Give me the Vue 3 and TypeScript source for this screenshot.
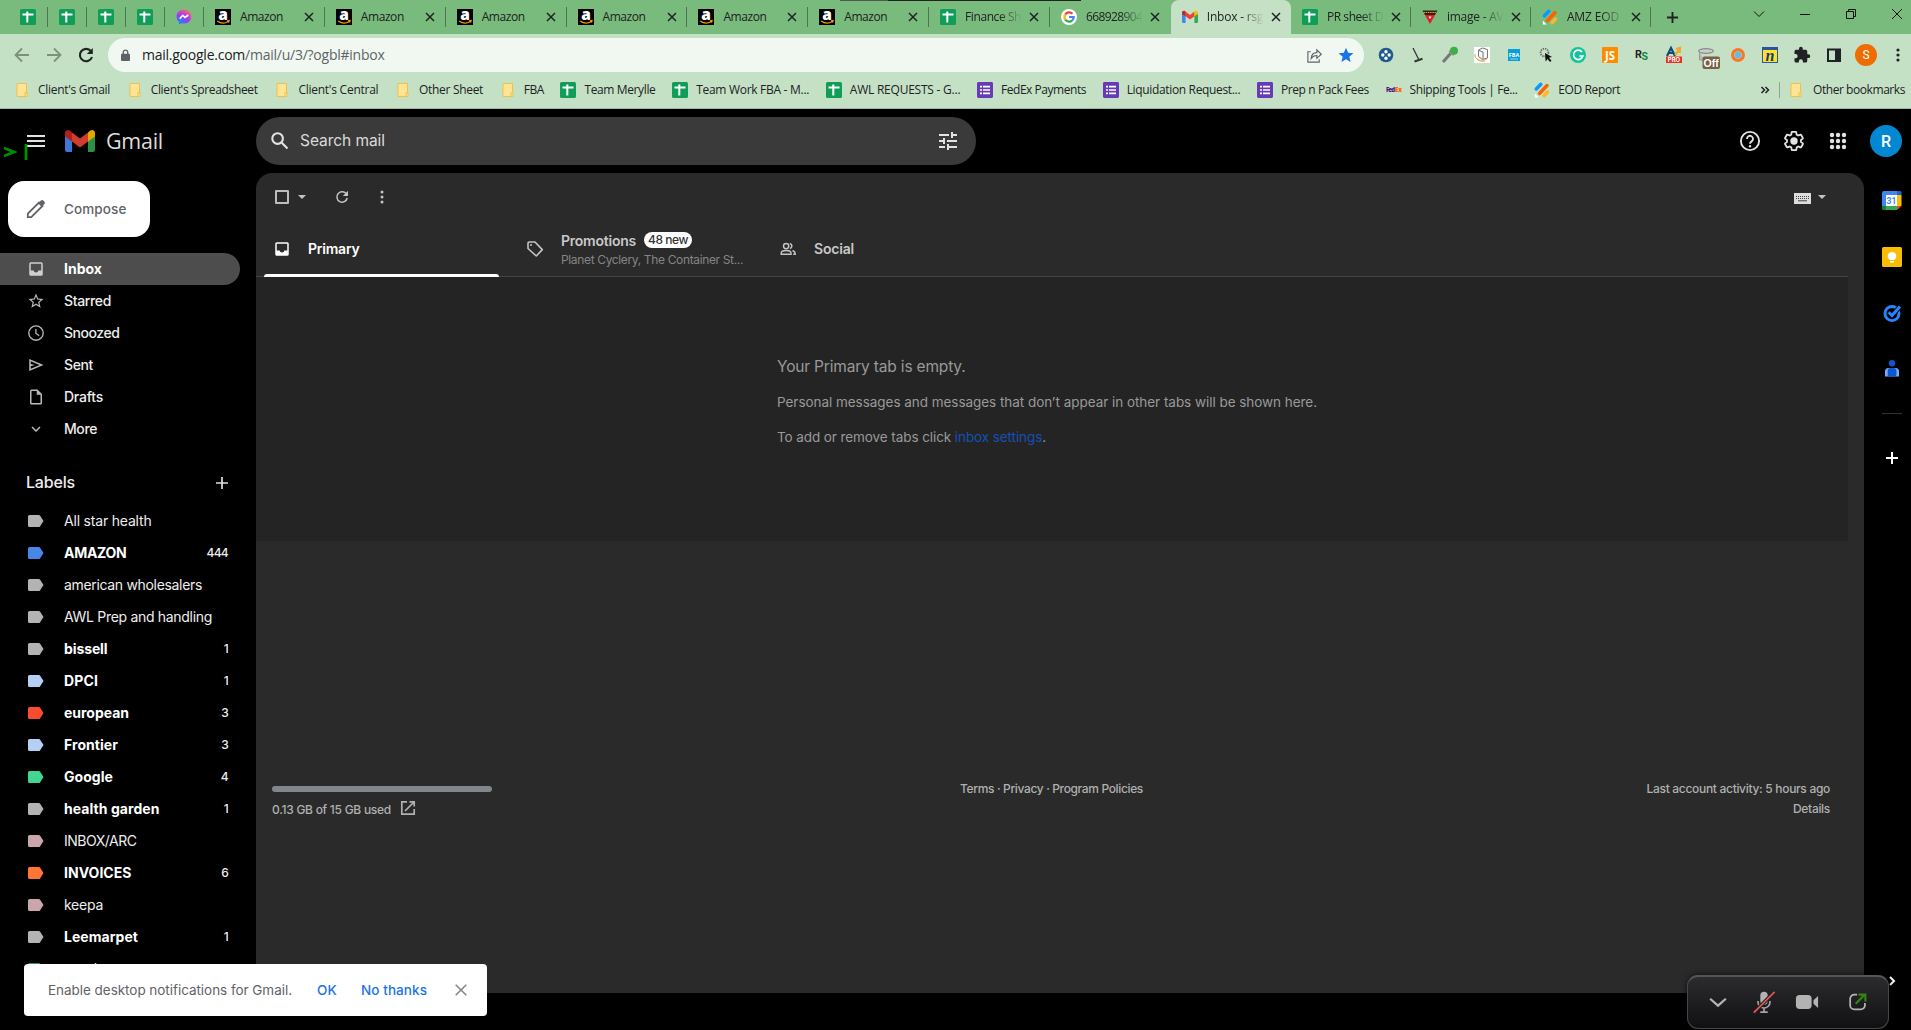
<script setup lang="ts">
import type { Directive } from 'vue'

/* Spreads the letters of a label over the width of its column. */
const vFit: Directive<HTMLElement, number | undefined> = {
  mounted(el, binding) {
    const text = el.textContent ?? ''
    if (!binding.value || !text.length) return
    const natural = el.getBoundingClientRect().width
    el.style.letterSpacing = `${((binding.value - natural) / text.length).toFixed(3)}px`
  },
}

const art: Record<string, string> = {
  sheet: '<rect width="16" height="16" rx="1.6" fill="#0f9d58"/><path d="M2.5 5.6h11M7.3 2.6v11" stroke="#fff" stroke-width="2"/>',
  form: '<rect width="16" height="16" rx="1.4" fill="#673ab7"/><path d="M3 4.6h2M3 8h2M3 11.4h2M6 4.6h7M6 8h7M6 11.4h7" stroke="#fff" stroke-width="1.7"/>',
  messenger: '<defs><radialGradient id="ms" cx=".2" cy="1" r="1.1"><stop offset="0" stop-color="#0695ff"/><stop offset=".6" stop-color="#a334fa"/><stop offset="1" stop-color="#ff6968"/></radialGradient></defs><path d="M8 .6C3.700.6.6 3.700.6 7.800c0 2.200.9 4 2.400 5.300v2.300l2.200-1.200c.9.3 1.800.4 2.800.4 4.300 0 7.400-3.100 7.400-7S12.300.6 8 .6z" fill="url(#ms)"/><path d="M3.700 9.700 6.700 6.300 9 8.400 12.300 6" stroke="#fff" stroke-width="1.600" fill="none"/>',
  amazon: '<rect width="16" height="16" fill="#000"/><text x="8" y="11" text-anchor="middle" font-family="Open Sans, sans-serif" font-weight="800" font-size="15.500" fill="#fff">a</text><path d="M2.200 12c3.500 2.600 8 2.500 11 .5M12 11.900l2-.3-.5 1.900" stroke="#f90" stroke-width="1.300" fill="none"/>',
  google: '<circle cx="8" cy="8" r="8" fill="#fff"/><g fill="none" stroke-width="2.200"><path d="M4.200 5.500A4.700 4.700 0 0 1 11.400 4.700" stroke="#ea4335"/><path d="M4.200 5.500a4.700 4.700 0 0 0 0 5" stroke="#fbbc05"/><path d="M4.200 10.500a4.700 4.700 0 0 0 6.900 1.100" stroke="#34a853"/><path d="M8 8h4.700a4.700 4.700 0 0 1-1.600 3.600" stroke="#4285f4"/></g>',
  gmail: '<path d="M0 3.500 3.600 6v8H1.200A1.200 1.200 0 0 1 0 12.800z" fill="#4285f4"/><path d="M16 3.500 12.400 6v8h2.400a1.200 1.200 0 0 0 1.200-1.200z" fill="#34a853"/><path d="M3.600 7.300V2.600L8 5.900l4.400-3.300v4.700L8 10.600z" fill="#ea4335"/><path d="M0 5V3.600C0 1.900 2 1.100 3.200 2.200l.4.3v4.800z" fill="#c5221f"/><path d="M16 5V3.600c0-1.700-2-2.500-3.200-1.400l-.4.3v4.800z" fill="#fbbc04"/>',
  image: '<path d="M.5 1.500h15L13 6H3z" fill="#321"/><path d="M1.500 3.500h13" stroke="#e8a23a" stroke-width="1" stroke-dasharray="1.500 .7"/><path d="M3 6h10l-5 9z" fill="#e01c24"/><path d="M6.500 7.500h3L8 10z" fill="#fff"/>',
  jot: '<g stroke-width="3.500" stroke-linecap="round"><path d="m2.300 7 4.500-4.700" stroke="#0a99ff"/><path d="m5.500 11.500 7.500-8" stroke="#ff6100"/><path d="m10 13.700 3.500-3.700" stroke="#ffb629"/></g><path d="M.8 11.500v4h4z" fill="#fff"/>',
  folder: '<path d="M3 1.500h9.500V14.500H3z" fill="#ffe494" stroke="#efc04b"/><path d="M11 10.500h2v4h-2z" fill="#ffe494" stroke="#efc04b"/>',
  fedex: '<text x="0" y="10" font-family="Open Sans, sans-serif" font-weight="800" font-size="6" textLength="9" fill="#4d148c">Fed</text><text x="9" y="10" font-family="Open Sans, sans-serif" font-weight="800" font-size="6" textLength="7" fill="#ff6200">Ex</text>',
}

const ext: string[] = [
  '<circle cx="10" cy="10" r="7.300" fill="#1d5b8f"/><g fill="#fff"><circle cx="10" cy="6.800" r="1.700"/><circle cx="10" cy="13.200" r="1.700"/><circle cx="6.800" cy="10" r="1.700"/><circle cx="13.200" cy="10" r="1.700"/></g>',
  '<path d="M5 3 11 15" stroke="#333" stroke-width="1.300"/><path d="m6.500 16.500 8-2.800" stroke="#333" stroke-width="2"/>',
  '<path d="m3 17 8-9" stroke="#777" stroke-width="3"/><path d="M9.500 5.500 14 10" stroke="#999" stroke-width="3"/><circle cx="14" cy="5.800" r="4" fill="#3fae49"/>',
  '<rect x="2" y="2" width="16" height="16" fill="#fff"/><path d="m6.500 5 4-2 5 1.500V13l-5 1.500-4-3z" fill="#f7f7f7" stroke="#777"/><path d="M7 5.500 11 7v7" stroke="#777" fill="none"/><path d="M3 9c-1 6 7 8 12 5M3 12c3 4 7 5 10 4" stroke="#f0a35c" fill="none"/>',
  '<rect x="4" y="4" width="12" height="12" fill="#0c9edb"/><text x="10" y="11.500" text-anchor="middle" font-family="Open Sans, sans-serif" font-weight="700" font-size="5.500" fill="#fff">FBA</text><path d="M6 14h8" stroke="#8bd3f3"/>',
  '<circle cx="8.500" cy="7.500" r="3.900" fill="none" stroke="#666" stroke-width="1.800" stroke-dasharray="1.300 1"/><path d="m9 8 7 4-3 .8 2.500 3-1.500 1.200-2.400-3-2 2.500z" fill="#111"/>',
  '<circle cx="10" cy="10" r="8" fill="#15c39a"/><path d="M14 7a4.700 4.700 0 1 0 .8 4H11.300" fill="none" stroke="#fff" stroke-width="1.700"/>',
  '<rect x="2" y="2" width="16" height="16" rx="1" fill="#ff8c00"/><text x="10" y="14.500" text-anchor="middle" font-family="Open Sans, sans-serif" font-weight="700" font-size="11.500" fill="#fff">JS</text>',
  '<text x="3" y="13" font-family="Inter, sans-serif" font-weight="700" font-size="10.500" fill="#222">R</text><text x="9.500" y="15" font-family="Inter, sans-serif" font-weight="700" font-size="10" fill="#16833a">S</text>',
  '<path d="m3 11 4-8 4 8M4.500 8h5" stroke="#124a78" stroke-width="2.200" fill="none"/><path d="m11 10 4-5M12 4l4-1-.3 5" stroke="#f5a623" stroke-width="2.200" fill="none"/><rect x="2" y="11.500" width="16" height="6.500" fill="#f02d1d"/><text x="10" y="17" text-anchor="middle" font-family="Inter, sans-serif" font-weight="700" font-size="6" fill="#fff">PRO</text>',
  '<ellipse cx="10" cy="6" rx="7.500" ry="2.300" fill="#ccc" stroke="#777"/><path d="M3.500 7v8h5" stroke="#999" fill="#bbb"/><rect x="6.500" y="11.500" width="17.500" height="12.500" rx="2" fill="#795f46"/><text x="15.200" y="21.500" text-anchor="middle" font-family="Liberation Sans, sans-serif" font-weight="700" font-size="10.500" fill="#fff">Off</text>',
  '<circle cx="10" cy="10" r="7.500" fill="#d9dfe4"/><circle cx="10" cy="10" r="5.300" fill="#fff" stroke="#f47b20" stroke-width="3.400"/><circle cx="10" cy="10" r="3.500" fill="#6db7e8"/>',
  '<rect x="2.500" y="2.500" width="15" height="15" fill="#ffe226" stroke="#2955a3"/><path d="M2.500 2.500h15v2.500h-15z" fill="#2955a3"/><text x="10" y="15.500" text-anchor="middle" font-family="Liberation Serif, serif" font-style="italic" font-weight="700" font-size="16" fill="#123b85">n</text>',
  '<g transform="translate(1 1) scale(.75)"><path d="M20.500 11H19V7a2 2 0 0 0-2-2h-4V3.500a2.500 2.500 0 0 0-5 0V5H4a2 2 0 0 0-2 2v3.800h1.500a2.700 2.700 0 0 1 0 5.400H2V20a2 2 0 0 0 2 2h3.800v-1.500a2.700 2.700 0 0 1 5.400 0V22H17a2 2 0 0 0 2-2v-4h1.500a2.500 2.500 0 0 0 0-5z" fill="#202124"/></g>',
  '<rect x="4" y="4.500" width="12" height="11.500" fill="none" stroke="#202124" stroke-width="2"/><path d="M11 4h5v12h-5z" fill="#202124"/>',
  '<circle cx="10" cy="10" r="11" fill="#ef6c00"/><text x="10" y="14.300" text-anchor="middle" font-family="Roboto, sans-serif" font-size="12" fill="#fff">S</text>',
  '<g fill="#202124"><circle cx="10" cy="5" r="1.600"/><circle cx="10" cy="10" r="1.600"/><circle cx="10" cy="15" r="1.600"/></g>',
]

interface Tab { icon: string; text: string; active?: boolean; fade?: boolean; late?: boolean; w?: number }
const pinned = ['sheet', 'sheet', 'sheet', 'sheet', 'messenger']
const tabs: Tab[] = [
  ...Array.from({ length: 6 }, () => ({ icon: 'amazon', text: 'Amazon', w: 43 })),
  { icon: 'sheet', text: 'Finance Sh', fade: true, w: 56 },
  { icon: 'google', text: '668928904', fade: true, w: 56.500 },
  { icon: 'gmail', text: 'Inbox - rsg', active: true, fade: true, w: 56.500 },
  { icon: 'sheet', text: 'PR sheet D', fade: true, late: true, w: 56 },
  { icon: 'image', text: 'image - AV', fade: true, late: true, w: 56.500 },
  { icon: 'jot', text: 'AMZ EOD', fade: true, late: true, w: 52 },
]

interface Bookmark { icon: string; text: string; w: number }
const bookmarks: Bookmark[] = [
  { icon: 'folder', text: "Client's Gmail", w: 72 },
  { icon: 'folder', text: "Client's Spreadsheet", w: 107 },
  { icon: 'folder', text: "Client's Central", w: 80 },
  { icon: 'folder', text: 'Other Sheet', w: 64 },
  { icon: 'folder', text: 'FBA', w: 20 },
  { icon: 'sheet', text: 'Team Merylle', w: 71 },
  { icon: 'sheet', text: 'Team Work FBA - M...', w: 113 },
  { icon: 'sheet', text: 'AWL REQUESTS - G...', w: 110.500 },
  { icon: 'form', text: 'FedEx Payments', w: 85 },
  { icon: 'form', text: 'Liquidation Request...', w: 113.500 },
  { icon: 'form', text: 'Prep n Pack Fees', w: 88 },
  { icon: 'fedex', text: 'Shipping Tools | Fe...', w: 108 },
  { icon: 'jot', text: 'EOD Report', w: 62 },
]

const p = {
  inbox: 'M19 3H5a2 2 0 0 0-2 2v14c0 1.100.9 2 2 2h14a2 2 0 0 0 2-2V5a2 2 0 0 0-2-2zm0 11h-4c0 1.660-1.340 2.500-3 2.500S9 15.660 9 14H5V5h14z',
  star: 'M22 9.240l-7.190-.62L12 2 9.190 8.630 2 9.240l5.460 4.730L5.820 21 12 17.270 18.180 21l-1.630-7.030L22 9.240zM12 15.400l-3.760 2.270 1-4.280-3.320-2.880 4.380-.38L12 6.100l1.710 4.040 4.380.38-3.320 2.880 1 4.280L12 15.400z',
  clock: 'M12 1.500a10.500 10.500 0 1 0 0 21 10.500 10.500 0 0 0 0-21zm0 19.200a8.700 8.700 0 1 1 0-17.400 8.700 8.700 0 0 1 0 17.400zM12.700 6.500H11v6.200l4.700 3.700 1-1.300-4-3.200z',
  send: 'M3 4v16l19-8zm2 3 11.800 5L5 17v-3.500l5.500-1.500L5 10.500z',
  draft: 'M14 2H6a2 2 0 0 0-2 2v16c0 1.100.9 2 2 2h12a2 2 0 0 0 2-2V8zM6 20V4h7v5h5v11z',
  down: 'M7.400 8.600 12 13.200l4.600-4.600L18 10l-6 6-6-6z',
}

const folders = [
  { icon: p.inbox, text: 'Inbox', w: 38, on: true },
  { icon: p.star, text: 'Starred', w: 47 },
  { icon: p.clock, text: 'Snoozed', w: 55.500 },
  { icon: p.send, text: 'Sent', w: 29 },
  { icon: p.draft, text: 'Drafts', w: 39 },
  { icon: p.down, text: 'More', w: 33 },
]

interface Label { text: string; w: number; color?: string; n?: number }
const labels: Label[] = [
  { text: 'All star health', w: 87.500 },
  { text: 'AMAZON', w: 62.500, color: '#4986e7', n: 444 },
  { text: 'american wholesalers', w: 138 },
  { text: 'AWL Prep and handling', w: 148 },
  { text: 'bissell', w: 43.500, n: 1 },
  { text: 'DPCI', w: 34, color: '#b6cff5', n: 1 },
  { text: 'european', w: 65, color: '#fb4c2f', n: 3 },
  { text: 'Frontier', w: 54, color: '#b6cff5', n: 3 },
  { text: 'Google', w: 49, color: '#42d692', n: 4 },
  { text: 'health garden', w: 95.500, n: 1 },
  { text: 'INBOX/ARC', w: 72.500, color: '#cca6ac' },
  { text: 'INVOICES', w: 67.500, color: '#ff7537', n: 6 },
  { text: 'keepa', w: 39, color: '#cca6ac' },
  { text: 'Leemarpet', w: 74, n: 1 },
  { text: 'market', w: 54, color: '#16a765' },
]
</script>

<template>
  <div class="screen">
    <header class="chrome">
      <div class="tabstrip">
        <i class="topline"></i>
        <div v-for="(k, i) in pinned" :key="i" class="pin">
          <svg class="fav" viewBox="0 0 16 16" v-html="art[k]"></svg>
        </div>
        <div v-for="(t, i) in tabs" :key="'t' + i" class="tab" :class="{ active: t.active, late: t.late, before: tabs[i + 1]?.active }">
          <svg class="fav" viewBox="0 0 16 16" v-html="art[t.icon]"></svg>
          <div class="ttl" :class="{ fade: t.fade }"><span v-fit="t.w">{{ t.text }}</span></div>
          <svg class="x" viewBox="0 0 10 10"><path d="m1 1 8 8M9 1 1 9" /></svg>
        </div>
        <svg class="newtab" viewBox="0 0 14 14"><path d="M7 1v12M1 7h12" /></svg>
        <div class="winctl">
          <svg viewBox="0 0 12 12"><path d="m1 3.500 5 5 5-5" /></svg>
          <svg viewBox="0 0 12 12"><path d="M1 6.500h10" /></svg>
          <svg viewBox="0 0 12 12"><path d="M1.500 3.500h7v7h-7zM3.500 3.500v-2h7v7h-2" /></svg>
          <svg viewBox="0 0 12 12"><path d="m1 1 10 10M11 1 1 11" /></svg>
        </div>
      </div>
      <div class="toolbar">
        <div class="nav">
          <svg viewBox="0 0 20 20" class="dim"><path d="M17 10H4M10 3.500 3.500 10l6.500 6.500" /></svg>
          <svg viewBox="0 0 20 20" class="dim"><path d="M3 10h13M10 3.500l6.500 6.500-6.500 6.500" /></svg>
          <svg viewBox="0 0 20 20"><path d="M15 6.200A6.200 6.200 0 1 0 16 12" /><path d="M16.800 3v6h-6z" fill="#202124" stroke="none" /></svg>
        </div>
        <div class="omni">
          <svg class="lock" viewBox="0 0 10 14"><path d="M1 5h8a1 1 0 0 1 1 1v6a1 1 0 0 1-1 1H1a1 1 0 0 1-1-1V6a1 1 0 0 1 1-1z" fill="#5f6368" /><path d="M2.500 6V3.500a2.500 2.500 0 0 1 5 0V6" fill="none" stroke="#5f6368" stroke-width="1.500" /></svg>
          <span class="url" v-fit="242.500"><b>mail.google.com</b>/mail/u/3/?ogbl#inbox</span>
          <svg class="share" viewBox="0 0 18 18"><path d="M5 5H2v11h12v-3M5.500 12c.3-4 2.500-6 6-6V3l4.700 4.700L11.500 12V9c-2.700 0-4.500.8-6 3z" /></svg>
          <svg class="bstar" viewBox="0 0 16 16"><path d="m8 .8 2.100 5 5.300.4-4.100 3.500 1.300 5.300L8 12.200 3.400 15l1.300-5.300L.6 6.200l5.300-.4z" /></svg>
        </div>
        <div class="exts">
          <svg v-for="(e, i) in ext" :key="i" viewBox="0 0 20 20" v-html="e"></svg>
        </div>
      </div>
      <div class="bookmarks">
        <div v-for="b in bookmarks" :key="b.text" class="bm">
          <svg viewBox="0 0 16 16" v-html="art[b.icon]"></svg>
          <div :style="{ width: b.w + 'px' }"><span v-fit="b.w">{{ b.text }}</span></div>
        </div>
        <div class="bm other">
          <svg class="more" viewBox="0 0 10 10"><path d="m1.500 2 3 3-3 3M5.500 2l3 3-3 3" /></svg>
          <i></i>
          <svg viewBox="0 0 16 16" v-html="art.folder"></svg>
          <span v-fit="92">Other bookmarks</span>
        </div>
      </div>
    </header>

    <div class="gmail">
      <div class="top">
        <div class="brand">
          <svg class="burger" viewBox="0 0 18 12"><path d="M0 1h18M0 6h18M0 11h18" /></svg>
          <svg class="logo" viewBox="0 0 30 22"><path d="M0 5 7 9v13H2a2 2 0 0 1-2-2z" fill="#3c78d8" /><path d="M30 5 23 9v13h5a2 2 0 0 0 2-2z" fill="#2b9147" /><path d="M7 11.500V2.500l8 6 8-6v9l-8 6z" fill="#d23c2e" /><path d="M0 7V3c0-2.700 3-4 5.300-2L7 2.500v9L0 6.500z" fill="#b01f1b" /><path d="M30 7V3c0-2.700-3-4-5.300-2L23 2.500v9l7-5z" fill="#e2a600" /></svg>
          <span class="name" v-fit="57">Gmail</span>
        </div>
        <div class="search">
          <svg class="mag" viewBox="0 0 18 18"><circle cx="6.600" cy="6.600" r="5.300" /><path d="m10.500 10.500 6 6" /></svg>
          <span v-fit="85">Search mail</span>
          <svg class="tune" viewBox="0 0 18 18"><path d="M0 3h10M13 0v6M13 3h5M0 9h4M5 6v6M8 9h10M0 15h6M9 12v6M9 15h9" /></svg>
        </div>
        <div class="acct">
          <svg viewBox="0 0 24 24"><circle cx="12" cy="12" r="9.100" fill="none" stroke="#e3e3e3" stroke-width="1.900" /><path d="M9 9.900a3 3 0 1 1 4.600 2.500c-1 .7-1.600 1.200-1.600 2.300" fill="none" stroke="#e3e3e3" stroke-width="1.900" /><circle cx="12" cy="17.200" r="1.200" /></svg>
          <svg viewBox="0 0 24 24"><path d="M19.400 13c0-.3.100-.7.100-1s0-.7-.1-1l2.100-1.600c.2-.2.300-.4.100-.7l-2-3.400c-.1-.2-.4-.3-.6-.2l-2.500 1a7 7 0 0 0-1.700-1l-.4-2.600a.5.500 0 0 0-.5-.4h-4a.5.500 0 0 0-.5.400L9.100 5.100a7 7 0 0 0-1.700 1l-2.500-1c-.2-.1-.5 0-.6.200l-2 3.400c-.1.200-.1.500.1.700L4.500 11a8 8 0 0 0 0 2l-2.100 1.600c-.2.200-.3.400-.1.700l2 3.400c.1.200.4.300.6.200l2.500-1a7 7 0 0 0 1.700 1l.4 2.600c0 .2.200.4.500.4h4c.3 0 .5-.2.500-.4l.4-2.600a7 7 0 0 0 1.700-1l2.500 1c.2.100.5 0 .6-.2l2-3.400c.1-.2.100-.5-.1-.7z" fill="none" stroke="#e3e3e3" stroke-width="1.900" transform="translate(.9 .9) scale(.925)" /><circle cx="12" cy="12" r="3.700" /></svg>
          <svg viewBox="0 0 24 24"><g v-for="y in [6, 12, 18]" :key="y"><circle v-for="x in [6, 12, 18]" :key="x" :cx="x" :cy="y" r="2.200" /></g></svg>
          <span class="avatar">R</span>
        </div>
      </div>

      <div class="main">
        <nav class="side">
          <div class="compose">
            <svg viewBox="0 0 20 20"><path d="M1.800 18.200v-3.500L13 3.500l3.500 3.500L5.300 18.200z" fill="none" stroke="#5f6368" stroke-width="1.800" /><path d="m12.200 4.300 2.700-2.700a1.700 1.700 0 0 1 2.400 0l1.100 1.100a1.700 1.700 0 0 1 0 2.400l-2.700 2.700z" fill="#5f6368" /></svg>
            <span v-fit="62.500">Compose</span>
          </div>
          <div v-for="f in folders" :key="f.text" class="row" :class="{ on: f.on }">
            <svg viewBox="0 0 24 24"><path :d="f.icon" /></svg>
            <span class="med" v-fit="f.w">{{ f.text }}</span>
          </div>
          <div class="lhead">
            <span v-fit="49">Labels</span>
            <svg viewBox="0 0 12 12"><path d="M6 0v12M0 6h12" /></svg>
          </div>
          <div v-for="l in labels" :key="l.text" class="row" :class="{ bold: l.n }">
            <svg class="tag" viewBox="0 0 16 12"><path d="M1.500 0h9.300a1.500 1.500 0 0 1 1.200.6L15.500 6 12 11.400a1.500 1.500 0 0 1-1.200.6H1.500A1.500 1.500 0 0 1 0 10.500v-9A1.500 1.500 0 0 1 1.500 0z" :fill="l.color ?? '#b3b3b3'" /></svg>
            <span v-fit="l.w">{{ l.text }}</span>
            <em v-if="l.n">{{ l.n }}</em>
          </div>
        </nav>

        <section class="panel">
          <div class="actions">
            <i class="box"></i><i class="caret"></i>
            <svg class="ref" viewBox="0 0 14 14"><path d="M11.500 4.200A5.200 5.200 0 1 0 12.200 8" fill="none" stroke="#c4c4c4" stroke-width="1.500" /><path d="M13 .8v5.200H7.800z" /></svg>
            <svg class="dots" viewBox="0 0 4 14"><circle cx="2" cy="2" r="1.500" /><circle cx="2" cy="7" r="1.500" /><circle cx="2" cy="12" r="1.500" /></svg>
            <svg class="kbd" viewBox="0 0 17 11"><path d="M0 0h17v11H0z" fill="#ddd" /><path d="M2 3.500h13M2 5.500h13" stroke="#444" stroke-dasharray="1 1" /><path d="M4 7.800h9" stroke="#444" /></svg>
            <i class="caret kc"></i>
          </div>
          <div class="cats">
            <div class="cat cur">
              <svg viewBox="0 0 24 24"><path :d="p.inbox" /></svg>
              <span v-fit="51.500">Primary</span>
            </div>
            <div class="cat promo">
              <svg viewBox="0 0 18 18"><path d="M2 3.200A1.200 1.200 0 0 1 3.200 2H9l7.300 7.600-6 6.400L2 8.500z" fill="none" stroke="#c4c4c4" stroke-width="1.600" stroke-linejoin="round" /><circle cx="5" cy="5" r="1" /></svg>
              <div>
                <div class="l1"><span v-fit="75">Promotions</span><b><span v-fit="40">48 new</span></b></div>
                <div class="l2"><span v-fit="182">Planet Cyclery, The Container St...</span></div>
              </div>
            </div>
            <div class="cat">
              <svg viewBox="0 0 24 24"><g fill="none" stroke="#c4c4c4" stroke-width="2"><circle cx="9.500" cy="8" r="3.500" /><path d="M3 19v-1.500C3 15 7 14 9.500 14s6.500 1 6.500 3.500V19zM14.500 4.600a3.500 3.500 0 0 1 0 6.800M18 14c2 .8 3.500 2 3.500 3.500V19H19" /></g></svg>
              <span v-fit="40">Social</span>
            </div>
          </div>
          <div class="empty">
            <p class="big"><span v-fit="188.500">Your Primary tab is empty.</span></p>
            <p><span v-fit="540">Personal messages and messages that don’t appear in other tabs will be shown here.</span></p>
            <p><span v-fit="269">To add or remove tabs click <a>inbox settings</a>.</span></p>
          </div>
          <footer>
            <div class="quota">
              <i></i>
              <div><span v-fit="119">0.13 GB of 15 GB used</span>
                <svg viewBox="0 0 14 14"><path d="M6 .8H.8v12.400h12.400V8M8.500.8h4.700v4.700M13 1 4 10" /></svg></div>
            </div>
            <div class="terms"><span v-fit="183">Terms · Privacy · Program Policies</span></div>
            <div class="activity"><div><span v-fit="183.500">Last account activity: 5 hours ago</span></div><div><span v-fit="37">Details</span></div></div>
          </footer>
        </section>

        <aside>
          <svg viewBox="0 0 20 20"><path d="M2 0h14v4H4v12H0V2a2 2 0 0 1 2-2z" fill="#4285f4" /><path d="M15 0h3a1.500 1.500 0 0 1 1.500 1.500V4H15z" fill="#1967d2" /><path d="M15 4h4.500v11H15z" fill="#fbbc04" /><path d="M4 15h11v4H4z" fill="#34a853" /><path d="M0 15h4v4H1.500A1.500 1.500 0 0 1 0 17.500z" fill="#188038" /><path d="M15 15h4.500L15 19z" fill="#ea4335" /><path d="M4 4h11v11H4z" fill="#fff" /><text x="9.500" y="12.800" text-anchor="middle" font-family="Roboto, sans-serif" font-weight="700" font-size="8.500" fill="#4285f4">31</text></svg>
          <svg viewBox="0 0 20 20"><rect width="20" height="20" rx="1.500" fill="#fbbc04" /><path d="M10 5a4.200 4.200 0 0 0-2.200 7.800V13h4.400v-.2A4.200 4.200 0 0 0 10 5zM8 14h4v1.500H8z" fill="#fff" /></svg>
          <svg viewBox="0 0 20 20"><circle cx="10" cy="10.500" r="7" fill="none" stroke="#2684fc" stroke-width="3" /><path d="m6.700 9.300 3.300 3.500 7.500-8.800" fill="none" stroke="#000" stroke-width="5" /><path d="m6.700 9.300 3.300 3.300 8-9" fill="none" stroke="#2684fc" stroke-width="3" /></svg>
          <svg viewBox="0 0 20 20"><path d="M6.500 9h7a3.500 3.500 0 0 1 3.500 3.500v5H3v-5A3.500 3.500 0 0 1 6.500 9z" fill="#7baaf7" /><path d="M8 9h3.500a3 3 0 0 1 3 3v3a2.500 2.500 0 0 1-2.500 2.500H5.700v-6A2.500 2.500 0 0 1 8 9z" fill="#0b57d0" /><circle cx="10" cy="4.300" r="3.200" fill="#0b57d0" /></svg>
          <i></i>
          <svg class="plus" viewBox="0 0 12 12"><path d="M6 0v12M0 6h12" /></svg>
          <svg class="collapse" viewBox="0 0 6 10"><path d="m1 1 4 4-4 4" /></svg>
        </aside>
      </div>
    </div>

    <svg class="prompt" viewBox="0 0 32 28"><path d="m4 12 10 4-10 4M26 8v16" /></svg>

    <div class="toast">
      <span class="msg" v-fit="244">Enable desktop notifications for Gmail.</span>
      <span class="act ok" v-fit="20">OK</span>
      <span class="act no" v-fit="66">No thanks</span>
      <svg viewBox="0 0 12 12"><path d="m.7.7 10.600 10.600M11.300.7.7 11.300" /></svg>
    </div>

    <div class="meet">
      <svg viewBox="0 0 26 26"><path d="m4.500 9.500 8.500 7.500 8.500-7.500" fill="none" stroke="#b3b3b3" stroke-width="2.400" /></svg>
      <svg viewBox="0 0 26 26"><rect x="9" y="2" width="8" height="14" rx="4" /><path d="M6.500 12v1a6.500 6.500 0 0 0 13 0v-1M13 20v4M9 24h8" fill="none" stroke="#a6a6a6" stroke-width="1.800" /><path d="M2 24.500 24.500 2" stroke="#222" stroke-width="4" /><path d="M2 24.500 24.500 2" stroke="#ee5555" stroke-width="1.700" /></svg>
      <svg viewBox="0 0 26 26"><rect x="1" y="5.500" width="17" height="15" rx="4" /><path d="M20 11 25 6.500v13L20 15z" /></svg>
      <svg viewBox="0 0 26 26"><path d="M12 5H9a4.500 4.500 0 0 0-4.500 4.500v7A4.500 4.500 0 0 0 9 21h7a4.500 4.500 0 0 0 4.500-4.500V14" fill="none" stroke="#b3b3b3" stroke-width="1.900" /><path d="M10.500 15 20 5.500M13.500 5H21v7.500" fill="none" stroke="#35850f" stroke-width="2.300" /></svg>
    </div>
  </div>
</template>

<style>
html, body { margin: 0; background: #000; overflow: hidden; }
</style>

<style scoped>
.screen { position: relative; width: 1911px; height: 1030px; overflow: hidden; background: #000; font-family: "Open Sans", "Noto Sans", sans-serif; display: flex; flex-direction: column; }
.screen svg { display: block; flex: none; overflow: visible; }
.screen span { display: inline-block; white-space: nowrap; flex: none; }
.chrome { height: 108px; flex: none; background: #c5e1c5; border-bottom: 1px solid #a4b5a4; font-size: 12px; color: #202124; }
.tabstrip { position: relative; height: 34px; background: #79bb7c; display: flex; padding-left: 9px; }
.topline { position: absolute; top: 0; left: 840px; width: 241px; height: 1px; background: linear-gradient(90deg, #555 20%, #222 20%); }
.pin { width: 39px; box-sizing: border-box; padding-right: 1px; display: flex; justify-content: center; align-items: center; position: relative; }
.pin::after, .tab::after { content: ""; position: absolute; right: 0; top: 7px; width: 1px; height: 20px; background: #4d7550; }
.fav { width: 16px; height: 16px; }
.tab { position: relative; width: 120.85px; box-sizing: border-box; padding-left: 11px; display: flex; align-items: center; }
.tab.late { width: 120px; }
.tab.active { background: #c5e1c5; border-radius: 8px 8px 0 0; width: 120.2px; }
.tab.active::after, .tab.before::after { display: none; }
.ttl { margin-left: 9px; width: 57px; height: 20px; line-height: 20px; }
.ttl.fade { mask-image: linear-gradient(90deg, #000 60%, transparent 100%); }
.x { width: 10px; height: 10px; margin-left: 7px; stroke: #202124; stroke-width: 1.5; fill: none; }
.newtab { width: 13px; height: 13px; align-self: center; margin-left: 15px; stroke: #202124; stroke-width: 2; }
.winctl { margin-left: auto; display: flex; gap: 34px; padding: 8px 8px 0 0; }
.winctl svg { width: 12px; height: 12px; stroke: #111; fill: none; stroke-width: 1; }
.toolbar { height: 42px; display: flex; align-items: center; }
.nav { width: 108px; display: flex; gap: 12px; padding-left: 12px; box-sizing: border-box; }
.nav svg { width: 20px; height: 20px; fill: none; stroke: #202124; stroke-width: 2.1; }
.nav .dim { stroke: #7c917d; stroke-width: 1.8; }
.omni { width: 1256px; height: 34px; border-radius: 17px; background: #f1f8f2; display: flex; align-items: center; box-sizing: border-box; padding: 0 10px 0 13px; flex: none; }
.lock { width: 9px; height: 13px; }
.url { margin-left: 12px; font-size: 14px; color: #5f6368; line-height: 20px; }
.url b { font-weight: 400; color: #202124; }
.share { width: 17px; height: 17px; margin-left: auto; fill: none; stroke: #5f6368; stroke-width: 1.2; }
.bstar { width: 16px; height: 16px; margin-left: 15px; fill: #1a73e8; }
.exts { display: flex; gap: 12px; padding-left: 12px; width: 535px; }
.exts svg { width: 20px; height: 20px; }
.bookmarks { height: 32px; display: flex; align-items: center; gap: 16.7px; padding: 2px 0 2px 14px; box-sizing: border-box; margin-top: -2px; }
.bm { display: flex; align-items: center; gap: 8px; line-height: 18px; }
.bm svg { width: 16px; height: 16px; }
.other { margin-left: auto; padding-right: 6px; gap: 9px; }
.other .more { width: 10px; height: 10px; fill: none; stroke: #202124; stroke-width: 1.5; }
.other i { width: 1px; height: 16px; background: #8fa890; margin-right: -1px; }

.gmail { flex: 1; min-height: 0; display: flex; flex-direction: column; font-family: Inter, Roboto, sans-serif; }
.top { height: 64px; flex: none; display: flex; align-items: center; }
.brand { width: 256px; display: flex; align-items: center; padding-left: 27px; box-sizing: border-box; }
.burger { width: 18px; height: 12px; stroke: #e3e3e3; stroke-width: 2; }
.logo { width: 30px; height: 22px; margin-left: 20px; }
.name { color: #dedede; font-size: 21.500px; margin-left: 11px; line-height: 28px; font-family: "Open Sans", sans-serif; }
.search { width: 720px; height: 48px; border-radius: 24px; background: #3a3a3a; display: flex; align-items: center; box-sizing: border-box; padding: 0 19px 0 15px; color: #dadada; font-size: 15.500px; }
.search span { padding-bottom: 2px; }
.mag { width: 18px; height: 18px; margin-right: 11px; fill: none; stroke: #e3e3e3; stroke-width: 2.1; }
.tune { width: 18px; height: 18px; margin-left: auto; stroke: #e3e3e3; stroke-width: 2; }
.acct { margin-left: auto; display: flex; align-items: center; gap: 20px; padding-right: 9px; fill: #e3e3e3; }
.acct svg { width: 24px; height: 24px; }
.avatar { width: 32px; height: 32px; border-radius: 16px; background: #0288d1; color: #fff; text-align: center; line-height: 33px; font-size: 16px; font-weight: 500; font-family: Roboto, sans-serif; }
.main { flex: 1; min-height: 0; display: flex; align-items: stretch; }
.side { width: 256px; flex: none; overflow: hidden; color: #eee; font-size: 14px; }
.compose { margin: 8px 0 16px 8px; width: 142px; height: 56px; border-radius: 16px; background: #fff; display: flex; align-items: center; color: #5f6368; font-weight: 500; font-size: 13.500px; }
.compose svg { width: 20px; height: 20px; margin: 0 18px 0 18px; }
.row { height: 32px; width: 240px; box-sizing: border-box; display: flex; align-items: center; padding: 0 12px 0 27px; }
.row span, .row em { padding-bottom: 2px; }
.row svg { width: 18px; height: 18px; fill: #b9b9b9; margin-right: 19px; }
.row .tag { width: 16px; height: 12px; margin: 0 20px 0 1px; }
.row .med { font-weight: 500; }
.row.on { background: #4d4d4d; border-radius: 0 16px 16px 0; color: #fff; }
.row.on svg { fill: #d0d0d0; }
.row.on .med, .row.bold span { font-weight: 700; color: #fff; }
.row em { font-style: normal; margin-left: auto; font-size: 12px; font-weight: 500; letter-spacing: -0.7px; }
.lhead { height: 44px; margin-top: 16px; display: flex; align-items: center; justify-content: space-between; padding: 0 28px 0 26px; font-size: 16px; font-weight: 500; width: 256px; box-sizing: border-box; }
.lhead span { padding-bottom: 2px; }
.lhead svg { width: 12px; height: 12px; stroke: #e0e0e0; stroke-width: 1.7; }
.panel { width: 1608px; height: 820px; background: #2a2a2a; border-radius: 16px 16px 0 0; flex: none; overflow: hidden; display: flex; flex-direction: column; color: #a8a8a8; }
.actions { height: 48px; display: flex; align-items: center; padding: 0 36px 0 19px; fill: #c4c4c4; }
.box { width: 10px; height: 10px; border: 2px solid #bdbdbd; border-radius: 1px; }
.caret { border: 4px solid transparent; border-top-color: #c4c4c4; border-bottom: 0; margin-left: 9px; }
.ref { width: 14px; height: 14px; margin-left: 29px; }
.dots { width: 4px; height: 14px; margin-left: 31px; }
.kbd { width: 17px; height: 11px; margin-left: auto; margin-top: 2px; }
.kc { margin-left: 7px; margin-right: 2px; }
.cats { height: 56px; width: 1592px; border-bottom: 1px solid #444; box-sizing: border-box; display: flex; padding-left: 8px; margin-bottom: 0; }
.cat { position: relative; width: 253px; box-sizing: border-box; padding-left: 15px; display: flex; align-items: center; color: #c8c8c8; fill: #c4c4c4; font-size: 14px; font-weight: 600; }
.cat svg { width: 18px; height: 18px; margin-right: 17px; }
.cat.cur { width: 235px; color: #fff; fill: #fff; margin-right: 17px; padding-left: 9px; }
.cat.cur::after { content: ""; position: absolute; left: 0; right: 0; bottom: -1px; height: 3px; background: #fff; border-radius: 3px 3px 0 0; }
.promo { padding-left: 10px; }
.l1 { display: flex; align-items: center; height: 20px; margin-top: 3px; }
.l1 b { margin-left: 8px; width: 48px; height: 16px; line-height: 16px; border-radius: 8px; background: #fff; color: #333; font-size: 12px; font-weight: 500; text-align: center; }
.l2 { font-size: 12px; font-weight: 400; color: #858585; line-height: 20px; }
.cat:last-child { padding-left: 10px; }
.empty { width: 1592px; height: 264px; background: #242424; box-sizing: border-box; padding: 79px 0 0 521px; font-size: 13.500px; color: #999; }
.empty p { margin: 0 0 15px; height: 20px; line-height: 20px; }
.empty p.big { font-size: 15.500px; height: 22px; line-height: 22px; margin-bottom: 14px; }
.empty a { color: #1550b5; }
footer { margin: 239px 34px 0 16px; display: flex; font-size: 12px; line-height: 20px; color: #b0b0b0; font-weight: 500; }
.quota { width: 220px; padding-top: 6px; }
.quota > i { display: block; height: 6px; border-radius: 3px; background: #80868b; margin-bottom: 6px; }
.quota div { display: flex; gap: 10px; align-items: center; height: 24px; }
.quota svg { width: 14px; height: 14px; fill: none; stroke: #b0b0b0; stroke-width: 1.7; margin-top: -4px; }
.terms { margin: -1px 0 0 468px; }
.activity { margin: -1px 0 0 auto; text-align: right; }
aside { flex: 1; display: flex; flex-direction: column; align-items: center; padding: 18px 0 0 9px; box-sizing: border-box; }
aside svg { width: 20px; height: 20px; margin-bottom: 36px; }
aside i { width: 20px; height: 1px; background: #333; margin-top: -2px; }
aside .plus { width: 12px; height: 12px; stroke: #fff; stroke-width: 2; margin: 38px 0 0; }
aside .collapse { width: 6px; height: 10px; margin-top: 512px; fill: none; stroke: #fff; stroke-width: 2; }
.prompt { position: absolute; left: 0; top: 136px; width: 32px; height: 28px; fill: none; stroke: #008f00; stroke-width: 2.8; filter: blur(0.6px); }
.toast { position: absolute; left: 24px; top: 964px; width: 463px; height: 52px; box-sizing: border-box; border-radius: 4px; background: #fff; display: flex; align-items: center; padding-left: 24px; font: 13.500px Inter, Roboto, sans-serif; color: #5f6368; }
.toast .act { color: #1a73e8; font-weight: 500; }
.toast .ok { margin-left: 25px; }
.toast .no { margin: 0 28px 0 24px; }
.toast svg { width: 12px; height: 12px; stroke: #888; stroke-width: 1.6; }
.meet { position: absolute; left: 1687px; top: 975px; width: 202px; height: 54px; box-sizing: border-box; border: 1px solid #47474a; border-top: 2px solid #555557; border-radius: 11px; background: linear-gradient(#2b2b2e, #111113); box-shadow: 0 0 6px #000a; display: flex; align-items: center; padding: 0 17px 1px; fill: #b3b3b3; }
.meet svg { width: 26px; height: 24px; }
.meet svg:nth-child(2) { margin-left: 20px; }
.meet svg:nth-child(3) { margin-left: 17px; }
.meet svg:nth-child(4) { margin-left: 25px; }
</style>
